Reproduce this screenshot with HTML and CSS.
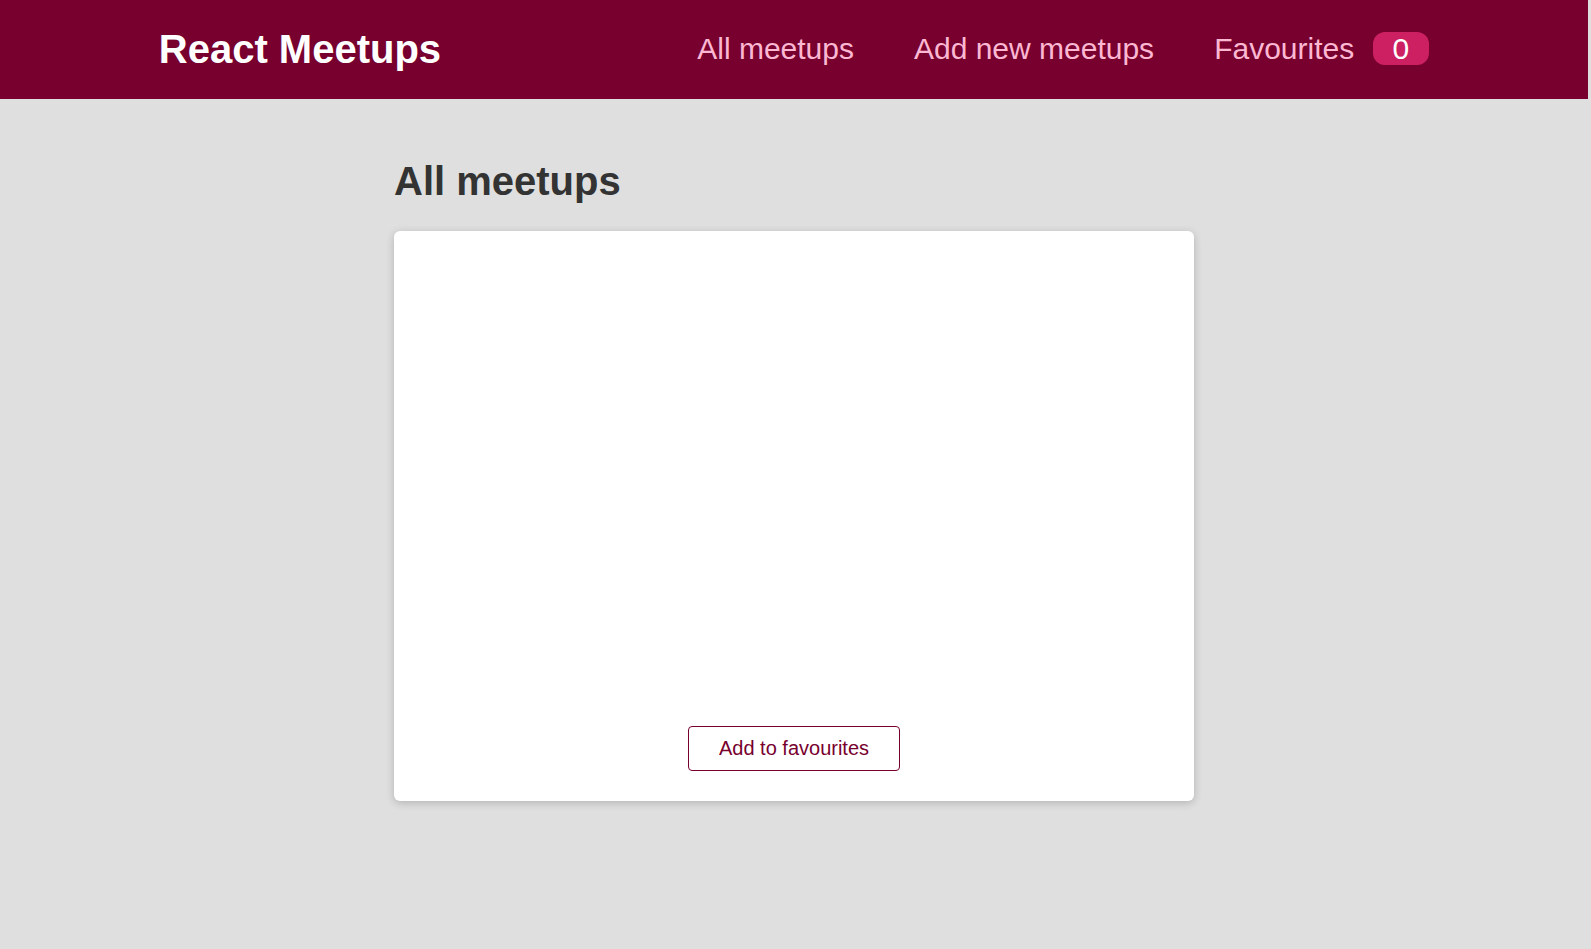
FILE: index.html
```html
<!DOCTYPE html>
<html lang="en">
<head>
<meta charset="utf-8">
<title>React Meetups</title>
<link rel="stylesheet" href="styles.css">
</head>
<body>
<div class="page">
  <header class="header">
    <div class="logo">React Meetups</div>
    <nav>
      <ul class="nav-list">
        <li><a href="#">All meetups</a></li>
        <li><a href="#">Add new meetups</a></li>
        <li><a href="#">Favourites <span class="badge">0</span></a></li>
      </ul>
    </nav>
  </header>
  <main class="main">
    <section>
      <h1 class="title">All meetups</h1>
      <ul class="list">
        <li class="item">
          <div class="card">
            <div class="image"></div>
            <div class="content">
              <h3></h3>
              <address></address>
              <p></p>
            </div>
            <div class="actions">
              <button class="fav-btn">Add to favourites</button>
            </div>
          </div>
        </li>
      </ul>
    </section>
  </main>
</div>
</body>
</html>
```

FILE: styles.css
```css
* {
  box-sizing: border-box;
}

html {
  font-family: "Liberation Sans", Arial, sans-serif;
  font-size: 20px;
}

body {
  margin: 0;
  background-color: #dfdfdf;
}

.page {
  margin-right: 3px;
}

.header {
  width: 100%;
  height: 99px;
  display: flex;
  align-items: center;
  justify-content: space-between;
  background-color: #77002e;
  padding: 0 10%;
}

.logo {
  font-size: 40px;
  color: #ffffff;
  font-weight: bold;
}

.nav-list {
  list-style: none;
  margin: 0 0 1px 0;
  padding: 0;
  display: flex;
  align-items: baseline;
}

.nav-list li {
  margin-left: 60px;
}

.nav-list a {
  text-decoration: none;
  font-size: 30px;
  color: #fcb8d2;
}

.badge {
  background-color: #cc2062;
  color: #ffffff;
  border-radius: 12px;
  padding: 0 20px;
  margin-left: 10px;
}

.main {
  margin: 60px auto;
  width: 90%;
  max-width: 800px;
}

.title {
  font-size: 40px;
  color: #333333;
  margin: 26.8px 0;
}

.list {
  list-style: none;
  margin: 0;
  padding: 0;
}

.item {
  margin: 20px 0;
}

.card {
  background-color: #ffffff;
  border-radius: 6px;
  box-shadow: 0 2px 8px rgba(0, 0, 0, 0.2);
}

.image {
  width: 100%;
  height: 400px;
  overflow: hidden;
  border-top-right-radius: 6px;
  border-top-left-radius: 6px;
}

.content {
  text-align: center;
  padding: 20px;
}

.content h3 {
  font-size: 25px;
  color: #2c292b;
}

.actions {
  padding: 30px;
  text-align: center;
}

.fav-btn {
  font: inherit;
  cursor: pointer;
  color: #77002e;
  border: 1px solid #77002e;
  background-color: transparent;
  padding: 10px 30px;
  border-radius: 4px;
}
```
